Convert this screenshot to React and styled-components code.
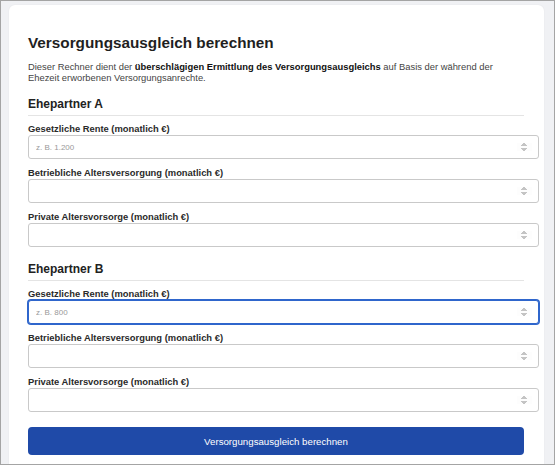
import React from "react";
import styled, { createGlobalStyle } from "styled-components";

const GlobalStyle = createGlobalStyle`
  html, body {
    margin: 0;
    padding: 0;
  }
  body {
    font-family: "Liberation Sans", Arial, sans-serif;
  }
`;

const Frame = styled.div`
  width: 555px;
  height: 465px;
  box-sizing: border-box;
  border: 1px solid #a4a4a4;
  background: #f0f1f4;
  padding: 4px 10px 0 8px;
  overflow: hidden;
`;

const Card = styled.div`
  background: #fff;
  border-radius: 6px;
  padding: 28px 20px 20px 19px;
  box-shadow: 0 0 2px rgba(0, 0, 0, 0.06);
`;

const Title = styled.h1`
  margin: 0 0 9px;
  font-size: 15.3px;
  line-height: 19px;
  font-weight: bold;
  color: #1f1f1f;
`;

const Intro = styled.p`
  margin: 0 0 14px;
  font-size: 9.4px;
  line-height: 11px;
  color: #444;
  b {
    color: #111;
  }
`;

const Section = styled.section`
  margin-bottom: 15px;
`;

const SectionTitle = styled.h2`
  margin: 0 0 7px;
  padding-bottom: 3px;
  font-size: 12px;
  line-height: 15px;
  font-weight: bold;
  color: #222;
  border-bottom: 1px solid #e4e4e4;
`;

const Field = styled.div`
  margin-bottom: 8px;
`;

const Label = styled.label`
  display: block;
  font-size: 9.4px;
  line-height: 12px;
  font-weight: bold;
  color: #2a2a2a;
`;

const Input = styled.input`
  display: block;
  width: 100%;
  height: 22px;
  padding: 0 6px 0 7px;
  border: 1px solid ${(p) => (p.$focused ? "#2f66cc" : "#c9c9c9")};
  box-shadow: ${(p) => (p.$focused ? "0 0 0 1px #2f66cc" : "none")};
  border-radius: 3px;
  background: #fff;
  font-family: "Liberation Sans", Arial, sans-serif;
  font-size: 8px;
  color: #333;
  outline: none;
  &::placeholder {
    color: #9a9a9a;
  }
  &::-webkit-inner-spin-button {
    opacity: 0.5;
  }
`;

const Button = styled.button`
  display: block;
  width: 100%;
  height: 28px;
  margin-top: 5px;
  border: none;
  border-radius: 4px;
  background: #1f4aa8;
  color: #fff;
  font-family: "Liberation Sans", Arial, sans-serif;
  font-size: 9.7px;
  cursor: pointer;
`;

const partners = [
  { name: "Ehepartner A", placeholder: "z. B. 1.200", focused: false },
  { name: "Ehepartner B", placeholder: "z. B. 800", focused: true },
];

const fields = [
  "Gesetzliche Rente (monatlich €)",
  "Betriebliche Altersversorgung (monatlich €)",
  "Private Altersvorsorge (monatlich €)",
];

const App = () => {
  return (
    <>
      <GlobalStyle />
      <Frame>
        <Card>
          <Title>Versorgungsausgleich berechnen</Title>
          <Intro>
            Dieser Rechner dient der{" "}
            <b>überschlägigen Ermittlung des Versorgungsausgleichs</b> auf
            Basis der während der Ehezeit erworbenen Versorgungsanrechte.
          </Intro>
          {partners.map((p) => (
            <Section key={p.name}>
              <SectionTitle>{p.name}</SectionTitle>
              {fields.map((f, i) => (
                <Field key={f}>
                  <Label>{f}</Label>
                  <Input
                    type="number"
                    placeholder={i === 0 ? p.placeholder : ""}
                    $focused={p.focused && i === 0}
                  />
                </Field>
              ))}
            </Section>
          ))}
          <Button>Versorgungsausgleich berechnen</Button>
        </Card>
      </Frame>
    </>
  );
};

export default App;
